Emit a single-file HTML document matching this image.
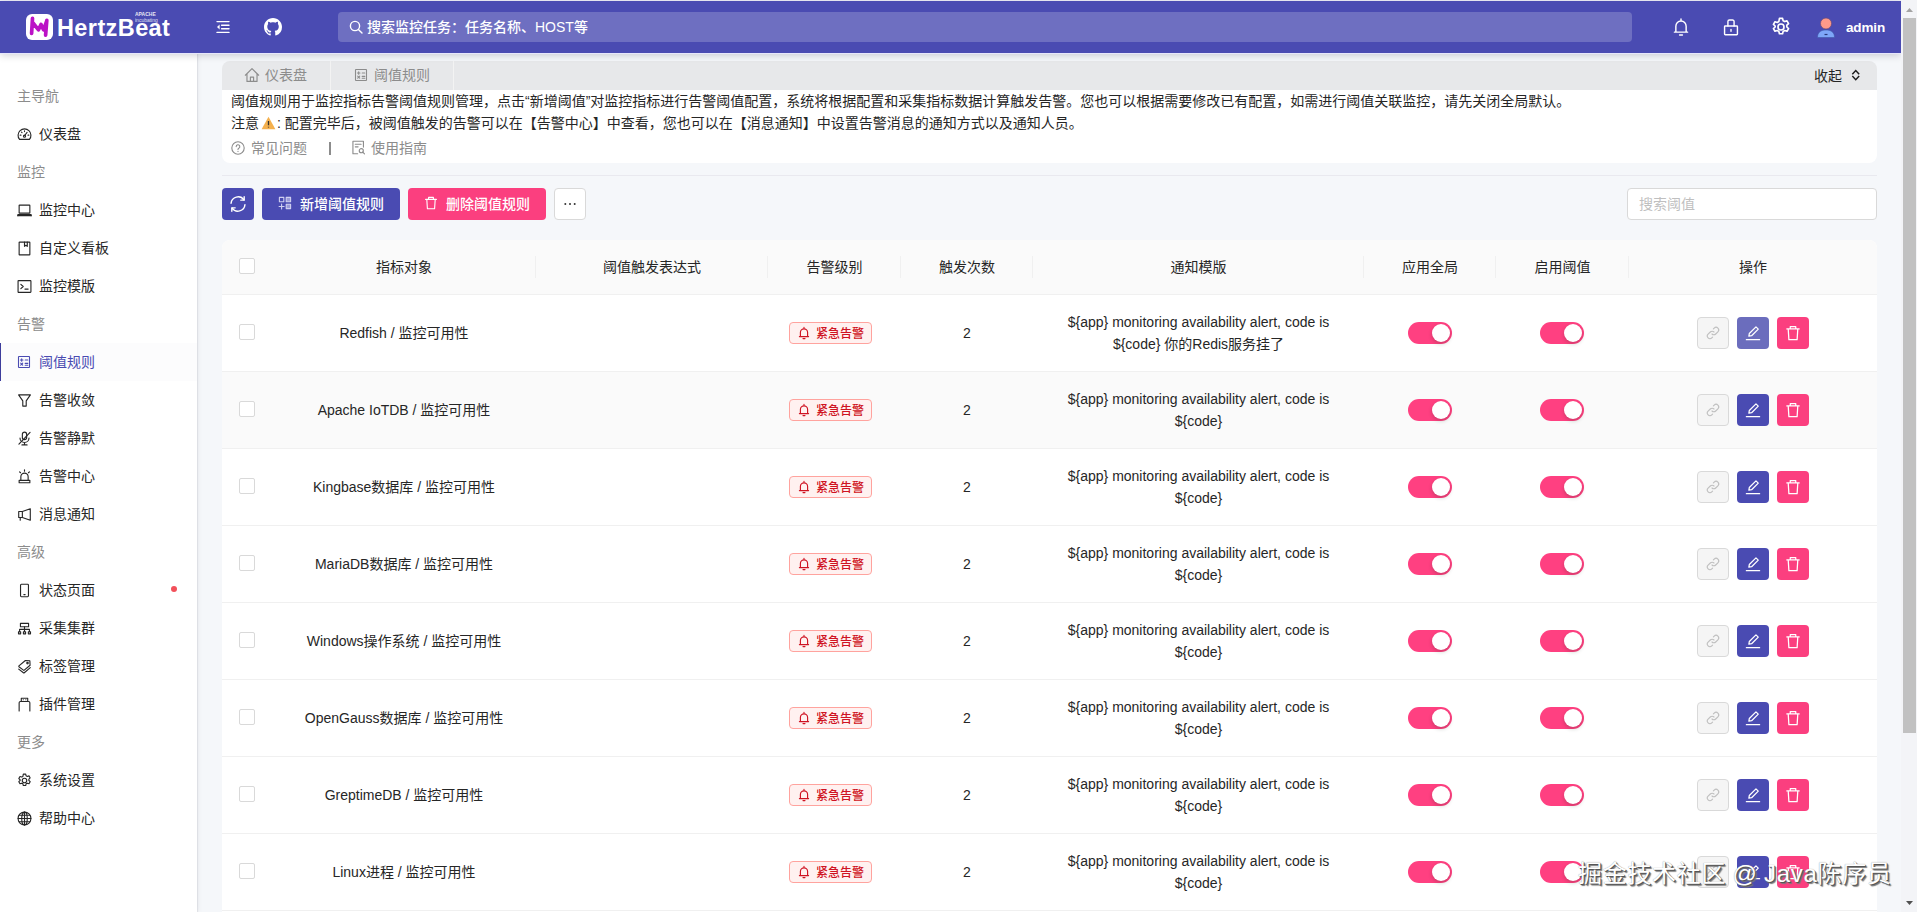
<!DOCTYPE html><html lang="zh-CN"><head><meta charset="utf-8"><title>HertzBeat</title><style>
*{box-sizing:border-box}
html,body{margin:0;padding:0}
body{width:1917px;height:912px;overflow:hidden;position:relative;background:#f5f7fa;
 font-family:"Liberation Sans","Noto Sans CJK SC",sans-serif;font-size:14px;line-height:22px;color:#262626}
.abs{position:absolute}
svg{display:block}
#topline{left:0;top:0;width:1917px;height:1px;background:#f1f1fa}
#hdr{z-index:5;left:0;top:1px;width:1901px;height:52px;background:#4a4bb2;box-shadow:0 1px 0 #e6e6fb,0 2px 8px rgba(0,10,40,.20)}
#side{left:0;top:53px;width:197px;height:859px;background:#fff;box-shadow:1px 0 1px rgba(40,40,70,.08),2px 0 5px rgba(29,35,41,.04)}
.grp{position:absolute;left:17px;height:38px;line-height:38px;color:#8c8c8c;font-size:14px;white-space:nowrap}
.itm{position:absolute;left:0;width:197px;height:38px;line-height:38px;white-space:nowrap;color:#262626}
.itm svg{position:absolute;left:16.500px;top:11.500px}
.itm span{position:absolute;left:39px;top:0}
.itm.sel{background:#fcfcfd;color:#4a4bb2}
.itm.sel:before{content:"";position:absolute;left:0;top:0;width:1.200px;height:38px;background:#3d3d9c}
#sbar{z-index:6;left:1901px;top:0;width:16px;height:912px;background:#f3f4f7}
#sthumb{z-index:7;left:1903px;top:18px;width:13px;height:715px;background:#c1c1c1}
#tabs{left:222px;top:61px;width:1655px;height:29px;background:#e7e8ea;border-radius:8px 8px 0 0}
#card{left:222px;top:90px;width:1655px;height:73px;background:#fff;border-radius:0 0 8px 8px}
.t{position:absolute;white-space:nowrap}
.btn{position:absolute;top:188px;height:32px;border-radius:4px}
#tbl{left:222px;top:240px;width:1655px;height:672px;background:#fff;border-radius:8px 8px 0 0;overflow:hidden}
.th{position:absolute;top:0;height:54px;line-height:54px;text-align:center;color:#262626}
.sep{position:absolute;top:16px;width:1px;height:22px;background:#f0f0f0}
.row{position:absolute;left:0;width:1655px;height:77px;border-bottom:1px solid #f0f0f0}
.cb{position:absolute;left:17px;width:16px;height:16px;border:1px solid #d9d9d9;border-radius:2px;background:#fff}
.c{position:absolute;text-align:center;white-space:nowrap}
.tag{position:absolute;left:567px;top:27px;width:83px;height:22px;border:1px solid #ffa39e;background:#fff1f0;border-radius:4px;color:#cf1322;font-size:12px;font-weight:500;line-height:20px}
.tag svg{position:absolute;left:7px;top:3px}
.tag span{position:absolute;left:26px;top:1px}
.sw{position:absolute;top:27px;width:44px;height:22px;border-radius:11px;background:#ff4081}
.sw:after{content:"";position:absolute;right:2px;top:2px;width:18px;height:18px;border-radius:9px;background:#fff;box-shadow:0 2px 4px rgba(0,35,11,.2)}
.ab{position:absolute;top:22px;width:32px;height:32px;border-radius:4px}
.ab svg{position:absolute;left:8px;top:8px}
</style></head><body>
<div class="abs" id="topline"></div>
<div class="abs" id="hdr">
<div class="abs" style="left:26px;top:13px;width:27px;height:26px;border-radius:6px;background:#fff"></div>
<svg class="abs" style="left:26px;top:13px" width="27" height="26" viewBox="0 0 27 26" fill="none" stroke="#bb12c6" stroke-width="3.700" stroke-linecap="round" stroke-linejoin="round"><path d="M6.500 4.300L5.600 19.300M7 9l5.500 6.800 2.500-5.300 2.500 5.300 3.300-8.800M20.800 6.300L19.600 21.200"/></svg>
<div class="t" style="left:57px;top:12px;font-size:23.500px;line-height:30px;font-weight:bold;color:#fff;letter-spacing:.400px">HertzBeat</div>
<div class="t" style="left:135px;top:10px;font-size:5px;line-height:6px;font-weight:bold;color:#fff;opacity:.85">APACHE</div>
<div class="t" style="left:135px;top:16px;font-size:5px;line-height:6px;color:#fff;opacity:.8">incubating</div>
<div class="abs" style="left:216px;top:19px;color:#fff"><svg width="14" height="14" viewBox="0 0 14 14" fill="none" stroke="currentColor" stroke-width="1.4" stroke-linecap="round" stroke-linejoin="round" ><path d="M1 1.600h12M5.600 5.200H13M5.600 8.800H13M1 12.400h12"/><path d="M3.600 4.600v4.800L1 7z" fill="currentColor" stroke="none"/></svg></div>
<svg class="abs" style="left:264px;top:17px" width="18" height="18" viewBox="0 0 16 16" fill="#fff"><path d="M8 0C3.580 0 0 3.580 0 8c0 3.540 2.290 6.530 5.470 7.590.400.070.550-.170.550-.380 0-.190-.010-.820-.010-1.490-2.010.370-2.530-.490-2.690-.940-.090-.230-.480-.940-.820-1.130-.280-.150-.680-.520-.010-.530.630-.010 1.080.580 1.230.820.720 1.210 1.870.870 2.330.660.070-.520.280-.870.510-1.070-1.780-.200-3.640-.890-3.640-3.950 0-.870.310-1.590.820-2.150-.080-.200-.360-1.020.080-2.120 0 0 .670-.210 2.200.820.640-.180 1.320-.270 2-.270s1.360.090 2 .270c1.530-1.040 2.200-.820 2.200-.820.440 1.100.160 1.920.080 2.120.510.560.820 1.270.820 2.150 0 3.070-1.870 3.750-3.650 3.950.290.250.540.730.540 1.480 0 1.070-.010 1.930-.010 2.200 0 .210.150.460.550.380A8.013 8.013 0 0 0 16 8c0-4.420-3.580-8-8-8z"/></svg>
<div class="abs" style="left:338px;top:11px;width:1294px;height:30px;border-radius:4px;background:rgba(255,255,255,.2)"></div>
<div class="abs" style="left:349px;top:19px;color:#fff"><svg width="14" height="14" viewBox="0 0 14 14" fill="none" stroke="currentColor" stroke-width="1.4" stroke-linecap="round" stroke-linejoin="round" ><circle cx="6" cy="6" r="4.600"/><path d="M9.400 9.400L13 13"/></svg></div>
<div class="t" style="left:367px;top:15px;color:#fff;font-weight:500;font-size:14px;line-height:22px">搜索监控任务：任务名称、HOST等</div>
<div class="abs" style="left:1671px;top:16px;color:#fff"><svg width="20" height="20" viewBox="0 0 14 14" fill="none" stroke="currentColor" stroke-width="1.0" stroke-linecap="round" stroke-linejoin="round" ><path d="M2.400 10.600h9.200M3.400 10.600V6.400a3.600 3.600 0 0 1 7.200 0v4.200M6 12.600h2M7 1.400v1.400"/></svg></div>
<div class="abs" style="left:1722px;top:17px;color:#fff"><svg width="18" height="18" viewBox="0 0 14 14" fill="none" stroke="currentColor" stroke-width="1.1" stroke-linecap="round" stroke-linejoin="round" ><rect x="2" y="6.200" width="10" height="6.800" rx=".5"/><path d="M4.600 6.200V2.800a1.200 1.200 0 0 1 1.200-1.200h2.400a1.200 1.200 0 0 1 1.200 1.200v3.400M7 9v1.400"/></svg></div>
<div class="abs" style="left:1771px;top:16px;color:#fff"><svg width="20" height="20" viewBox="0 0 14 14" fill="none" stroke="currentColor" stroke-width="1.15" stroke-linecap="round" stroke-linejoin="round" ><circle cx="7" cy="7" r="2.1"/><path d="M5.9 1h2.2l.4 1.6 1.1.6 1.6-.5 1.1 1.9-1.2 1.1v1.3l1.2 1.1-1.1 1.9-1.6-.5-1.1.6-.4 1.6H5.900l-.4-1.6-1.100-.6-1.600.5-1.100-1.900 1.200-1.100V6.300L1.700 5.200l1.100-1.900 1.600.5 1.100-.6z"/></svg></div>
<svg class="abs" style="left:1816px;top:15px" width="20" height="22" viewBox="0 0 20 22"><path d="M1.500 21.500c0-5 3-7.500 8.500-7.500s8.500 2.500 8.500 7.500z" fill="#7ea6f8" stroke="#4057a8" stroke-width=".600"/><path d="M8.500 18.500h3" stroke="#2a3a78" stroke-width="1.200"/><circle cx="10" cy="7.500" r="5.500" fill="#ff9a8a" stroke="#6a4a78" stroke-width=".700"/></svg>
<div class="t" style="left:1846px;top:16px;color:#fff;font-size:13.500px;line-height:22px;font-weight:bold;letter-spacing:-.150px">admin</div>
</div>
<div class="abs" id="side">
<div class="grp" style="top:24px">主导航</div>
<div class="itm" style="top:62px"><svg width="15" height="15" viewBox="0 0 14 14" fill="none" stroke="currentColor" stroke-width="1.05" stroke-linecap="round" stroke-linejoin="round" ><path d="M2.400 11.600A6 6 0 1 1 11.600 11.600z"/><path d="M7 8.200L9.400 5"/><circle cx="7" cy="8.600" r="1"/><path d="M3 7.600h.7M10.300 7.600h.7M7 3.600v.7M4.200 4.800l.5.5"/></svg><span>仪表盘</span></div>
<div class="grp" style="top:100px">监控</div>
<div class="itm" style="top:138px"><svg width="15" height="15" viewBox="0 0 14 14" fill="none" stroke="currentColor" stroke-width="1.05" stroke-linecap="round" stroke-linejoin="round" ><rect x="2" y="2" width="10" height="7.5" rx=".4"/><path d="M.8 11.8h12.4"/><path d="M.8 11.8v-.9h12.4v.9" /></svg><span>监控中心</span></div>
<div class="itm" style="top:176px"><svg width="15" height="15" viewBox="0 0 14 14" fill="none" stroke="currentColor" stroke-width="1.05" stroke-linecap="round" stroke-linejoin="round" ><rect x="2" y="1" width="10" height="12" rx=".5"/><path d="M7 1v4l1.3-1 1.3 1V1"/></svg><span>自定义看板</span></div>
<div class="itm" style="top:214px"><svg width="15" height="15" viewBox="0 0 14 14" fill="none" stroke="currentColor" stroke-width="1.05" stroke-linecap="round" stroke-linejoin="round" ><rect x="1" y="1.5" width="12" height="11" rx=".5"/><path d="M3.6 5l2.2 2-2.2 2M7.4 9.4h3"/></svg><span>监控模版</span></div>
<div class="grp" style="top:252px">告警</div>
<div class="itm sel" style="top:290px"><svg style="left:17px;top:12px" width="14" height="14" viewBox="0 0 14 14" fill="none" stroke="currentColor" stroke-width="1.1" stroke-linecap="round" stroke-linejoin="round" ><rect x="1.500" y="1.500" width="11" height="11" rx=".5"/><path d="M3.400 5h2.600M4.700 3.700v2.600M8.200 5h2.600M3.700 8.200l2 2M5.700 8.200l-2 2M8.200 8.400h2.600M8.200 10.200h2.600"/></svg><span>阈值规则</span></div>
<div class="itm" style="top:328px"><svg width="15" height="15" viewBox="0 0 14 14" fill="none" stroke="currentColor" stroke-width="1.05" stroke-linecap="round" stroke-linejoin="round" ><path d="M1.5 1.8h11L8.6 7.4v4.8H5.4V7.4z"/></svg><span>告警收敛</span></div>
<div class="itm" style="top:366px"><svg width="15" height="15" viewBox="0 0 14 14" fill="none" stroke="currentColor" stroke-width="1.05" stroke-linecap="round" stroke-linejoin="round" ><rect x="5" y="1" width="4" height="7" rx="2"/><path d="M2.8 6.5a4.2 4.2 0 0 0 8.4 0M7 10.8V13M4.6 13h4.8M12.2 1.2L1.8 12.2"/></svg><span>告警静默</span></div>
<div class="itm" style="top:404px"><svg width="15" height="15" viewBox="0 0 14 14" fill="none" stroke="currentColor" stroke-width="1.05" stroke-linecap="round" stroke-linejoin="round" ><path d="M3.6 10.6V7.2a3.4 3.4 0 0 1 6.8 0v3.4M2 10.6h10v2.2H2zM7 .8v1.2M2.4 2.6l.9.9M11.6 2.6l-.9.9"/></svg><span>告警中心</span></div>
<div class="itm" style="top:442px"><svg width="15" height="15" viewBox="0 0 14 14" fill="none" stroke="currentColor" stroke-width="1.05" stroke-linecap="round" stroke-linejoin="round" ><path d="M12.4 1.6v10.8L5 9.8H1.6V4.2H5zM5 4.2v5.6M3 9.8v2.6"/></svg><span>消息通知</span></div>
<div class="grp" style="top:480px">高级</div>
<div class="itm" style="top:518px"><svg width="15" height="15" viewBox="0 0 14 14" fill="none" stroke="currentColor" stroke-width="1.05" stroke-linecap="round" stroke-linejoin="round" ><rect x="3.300" y="1.200" width="7.400" height="11.600" rx=".8"/><path d="M6.400 10.800h1.200"/></svg><span>状态页面</span></div>
<div class="abs" style="left:171px;top:533px;width:6px;height:6px;border-radius:3px;background:#f2505a"></div>
<div class="itm" style="top:556px"><svg width="15" height="15" viewBox="0 0 14 14" fill="none" stroke="currentColor" stroke-width="1.05" stroke-linecap="round" stroke-linejoin="round" ><rect x="3.200" y="2.200" width="7.600" height="3.200"/><path d="M7 5.400v2.400M2.400 10V7.800h9.200V10M7 7.800V10"/><rect x="1.400" y="10" width="2" height="2"/><rect x="6" y="10" width="2" height="2"/><rect x="10.600" y="10" width="2" height="2"/></svg><span>采集集群</span></div>
<div class="itm" style="top:594px"><svg width="15" height="15" viewBox="0 0 14 14" fill="none" stroke="currentColor" stroke-width="1.05" stroke-linecap="round" stroke-linejoin="round" ><path d="M7.800 1.400l4.200.2.200 4.200-5.400 4.600a.6.600 0 0 1-.800 0L1.800 7.200a.6.600 0 0 1 0-.800z"/><circle cx="9.800" cy="3.800" r=".700"/><path d="M1.600 9.400l4.400 3.400a.6.600 0 0 0 .800 0l5.600-4.800"/></svg><span>标签管理</span></div>
<div class="itm" style="top:632px"><svg width="15" height="15" viewBox="0 0 14 14" fill="none" stroke="currentColor" stroke-width="1.05" stroke-linecap="round" stroke-linejoin="round" ><path d="M4 4.2V1.2h6v3M2 13V5.4c0-.7.5-1.2 1.2-1.2h7.6c.7 0 1.2.5 1.2 1.2V13M5.8 2.6h.1M8.2 2.6h.1"/></svg><span>插件管理</span></div>
<div class="grp" style="top:670px">更多</div>
<div class="itm" style="top:708px"><svg width="15" height="15" viewBox="0 0 14 14" fill="none" stroke="currentColor" stroke-width="1.05" stroke-linecap="round" stroke-linejoin="round" ><circle cx="7" cy="7" r="2.1"/><path d="M5.9 1h2.2l.4 1.6 1.1.6 1.6-.5 1.1 1.9-1.2 1.1v1.3l1.2 1.1-1.1 1.9-1.6-.5-1.1.6-.4 1.6H5.900l-.4-1.6-1.100-.6-1.600.5-1.100-1.900 1.200-1.100V6.300L1.700 5.200l1.100-1.900 1.600.5 1.100-.6z"/></svg><span>系统设置</span></div>
<div class="itm" style="top:746px"><svg width="15" height="15" viewBox="0 0 14 14" fill="none" stroke="currentColor" stroke-width="1.05" stroke-linecap="round" stroke-linejoin="round" ><circle cx="7" cy="7" r="6"/><ellipse cx="7" cy="7" rx="2.6" ry="6"/><path d="M1 7h12M1.800 4h10.400M1.800 10h10.400M7 1v12"/></svg><span>帮助中心</span></div>
</div>
<div class="abs" id="sbar"></div><div class="abs" id="sthumb"></div>
<svg class="abs" style="z-index:7;left:1906px;top:8px" width="7" height="4" viewBox="0 0 7 4"><path d="M0 4L3.500 0 7 4z" fill="#a3a3a3"/></svg>
<svg class="abs" style="z-index:7;left:1906px;top:901px" width="7" height="4" viewBox="0 0 7 4"><path d="M0 0L3.500 4 7 0z" fill="#505050"/></svg>
<div class="abs" id="tabs">
<div class="abs" style="left:108px;top:0;width:1px;height:29px;background:#f3f3f3"></div>
<div class="abs" style="left:231px;top:0;width:1px;height:29px;background:#f3f3f3"></div>
<div class="abs" style="left:22px;top:6px;color:#8c8c8c"><svg width="16" height="16" viewBox="0 0 14 14" fill="none" stroke="currentColor" stroke-width="1.0" stroke-linecap="round" stroke-linejoin="round" ><path d="M1.200 7.200L7 1.400l5.800 5.800M2.600 6v6.600h8.800V6M5.600 12.600V8.800h2.800v3.800"/></svg></div>
<div class="t" style="left:43px;top:3px;color:#8c8c8c">仪表盘</div>
<div class="abs" style="left:132px;top:7px;color:#8c8c8c"><svg width="14" height="14" viewBox="0 0 14 14" fill="none" stroke="currentColor" stroke-width="1.1" stroke-linecap="round" stroke-linejoin="round" ><rect x="1.500" y="1.500" width="11" height="11" rx=".5"/><path d="M3.400 5h2.600M4.700 3.700v2.600M8.200 5h2.600M3.700 8.200l2 2M5.700 8.200l-2 2M8.200 8.400h2.600M8.200 10.200h2.600"/></svg></div>
<div class="t" style="left:152px;top:3px;color:#8c8c8c">阈值规则</div>
<div class="t" style="left:1592px;top:4px;color:#262626;font-size:14px">收起</div>
<svg class="abs" style="left:1629px;top:8px" width="9.500" height="12" viewBox="0 0 11 14" fill="none" stroke="#1a1a1a" stroke-width="1.700" stroke-linejoin="miter"><path d="M1.500 6L5.500 1.800 9.500 6M1.500 8.200L5.500 12.400 9.500 8.200"/></svg>
</div>
<div class="abs" id="card">
<div class="t" style="left:9px;top:0">阈值规则用于监控指标告警阈值规则管理，点击“新增阈值”对监控指标进行告警阈值配置，系统将根据配置和采集指标数据计算触发告警。您也可以根据需要修改已有配置，如需进行阈值关联监控，请先关闭全局默认。</div>
<div class="t" style="left:9px;top:22px">注意<span style="display:inline-block;width:18px"></span>: 配置完毕后，被阈值触发的告警可以在【告警中心】中查看，您也可以在【消息通知】中设置告警消息的通知方式以及通知人员。</div>
<svg class="abs" style="left:39px;top:26px" width="15" height="14" viewBox="0 0 15 14"><path d="M7.500 .800L14.400 13.200H.600z" fill="#f4b04e"/><path d="M7.500 5v4.200M7.500 10.800v.8" stroke="#333" stroke-width="1.300" fill="none"/></svg>
<div class="abs" style="left:9px;top:51px;color:#8c8c8c"><svg width="14" height="14" viewBox="0 0 14 14" fill="none" stroke="currentColor" stroke-width="1.1" stroke-linecap="round" stroke-linejoin="round" ><circle cx="7" cy="7" r="6.200"/><path d="M5.200 5.600a1.800 1.800 0 1 1 2.600 1.600c-.5.300-.8.600-.8 1.200M7 10.200v.2"/></svg></div>
<div class="t" style="left:29px;top:47px;color:#8c8c8c">常见问题</div>
<div class="abs" style="left:107px;top:52px;width:2px;height:13px;background:#8c8c8c"></div>
<div class="abs" style="left:129px;top:50px;color:#8c8c8c"><svg width="15" height="15" viewBox="0 0 14 14" fill="none" stroke="currentColor" stroke-width="1.05" stroke-linecap="round" stroke-linejoin="round" ><path d="M11.600 6.600V1.200H1.800v11.600h4.400M4 4h5.400M4 6.400h2.600"/><circle cx="9.600" cy="10" r="1.900"/><path d="M11 11.400l1.600 1.600"/></svg></div>
<div class="t" style="left:149px;top:47px;color:#8c8c8c">使用指南</div>
</div>
<div class="abs" style="left:222px;top:175px;width:1655px;height:1px;background:#e9e9ef"></div>
<div class="btn" style="left:222px;width:32px;background:#4a4bb2;color:#fff"><div class="abs" style="left:7px;top:7px"><svg width="18" height="18" viewBox="0 0 14 14" fill="none" stroke="currentColor" stroke-width="1.1" stroke-linecap="round" stroke-linejoin="round" ><path d="M1.600 6.400A5.500 5.500 0 0 1 11.600 3.800M12.400 7.600A5.500 5.500 0 0 1 2.400 10.200"/><path d="M11.800 1.400v2.600H9.200M2.200 12.600V10h2.600"/></svg></div></div>
<div class="btn" style="left:262px;width:138px;background:#4a4bb2;color:#fff"><div class="abs" style="left:16px;top:8px;color:#cfcff0"><svg width="14" height="14" viewBox="0 0 14 14" fill="none" stroke="currentColor" stroke-width="1.1" stroke-linecap="round" stroke-linejoin="round" ><rect x="1.400" y="1.400" width="4.400" height="4.400"/><rect x="8.200" y="1.400" width="4.400" height="4.400" fill="#9a9ad8"/><rect x="8.200" y="8.200" width="4.400" height="4.400" fill="#9a9ad8"/><path d="M3.600 8v5M1.100 10.500h5"/></svg></div><div class="t" style="left:38px;top:5px;font-weight:500">新增阈值规则</div></div>
<div class="btn" style="left:408px;width:138px;background:#fb3f7f;color:#fff"><div class="abs" style="left:16px;top:8px"><svg width="14" height="14" viewBox="0 0 14 14" fill="none" stroke="currentColor" stroke-width="1.1" stroke-linecap="round" stroke-linejoin="round" ><path d="M1.600 3.400h10.800M4.600 3.400V1.400h4.800v2M2.800 3.400l.6 9.400h7.200l.6-9.400"/></svg></div><div class="t" style="left:38px;top:5px;font-weight:500">删除阈值规则</div></div>
<div class="btn" style="left:554px;width:32px;background:#fff;border:1px solid #d9d9d9"><svg class="abs" style="left:8px;top:8px" width="14" height="14" viewBox="0 0 14 14" fill="#333"><circle cx="2.300" cy="7" r="1"/><circle cx="7" cy="7" r="1"/><circle cx="11.700" cy="7" r="1"/></svg></div>
<div class="abs" style="left:1627px;top:188px;width:250px;height:32px;border:1px solid #d9d9d9;border-radius:4px;background:#fff"><div class="t" style="left:11px;top:4px;color:#bfbfbf">搜索阈值</div></div>
<div class="abs" id="tbl">
<div class="abs" style="left:0;top:0;width:1655px;height:55px;background:#fafafa;border-bottom:1px solid #f0f0f0">
<div class="cb" style="top:18px"></div>
<div class="th" style="left:50px;width:264px">指标对象</div>
<div class="sep" style="left:313px"></div>
<div class="th" style="left:314px;width:232px">阈值触发表达式</div>
<div class="sep" style="left:545px"></div>
<div class="th" style="left:546px;width:133px">告警级别</div>
<div class="sep" style="left:678px"></div>
<div class="th" style="left:679px;width:132px">触发次数</div>
<div class="sep" style="left:810px"></div>
<div class="th" style="left:811px;width:331px">通知模版</div>
<div class="sep" style="left:1141px"></div>
<div class="th" style="left:1142px;width:132px">应用全局</div>
<div class="sep" style="left:1273px"></div>
<div class="th" style="left:1274px;width:133px">启用阈值</div>
<div class="sep" style="left:1406px"></div>
<div class="th" style="left:1407px;width:248px">操作</div>
</div>
<div class="row" style="top:55px;background:#fff">
<div class="cb" style="top:29px"></div>
<div class="c" style="left:50px;width:264px;top:27px">Redfish / 监控可用性</div>
<div class="tag"><svg width="14" height="14" viewBox="0 0 14 14" fill="none" stroke="currentColor" stroke-width="1.15" stroke-linecap="round" stroke-linejoin="round" ><path d="M2.400 10.600h9.200M3.400 10.600V6.400a3.600 3.600 0 0 1 7.200 0v4.200M6 12.600h2M7 1.400v1.400"/></svg><span>紧急告警</span></div>
<div class="c" style="left:679px;width:132px;top:27px">2</div>
<div class="c" style="left:811px;width:331px;top:16px">${app} monitoring availability alert, code is<br>${code} 你的Redis服务挂了</div>
<div class="sw" style="left:1186px"></div><div class="sw" style="left:1318px"></div>
<div class="ab" style="left:1475px;background:#f5f5f5;border:1px solid #d9d9d9;color:#bfbfbf"><svg style="left:8px;top:8px" width="14" height="14" viewBox="0 0 14 14" fill="none" stroke="currentColor" stroke-width="1.1" stroke-linecap="round" stroke-linejoin="round" ><path d="M6 8a2.600 2.600 0 0 0 3.700 0l2.200-2.200a2.600 2.600 0 0 0-3.700-3.700L7.400 2.900M8 6a2.600 2.600 0 0 0-3.700 0L2.100 8.200a2.600 2.600 0 0 0 3.700 3.700l.800-.800"/></svg></div>
<div class="ab" style="left:1515px;background:#6b6dbd;color:#fff"><svg width="16" height="16" viewBox="0 0 14 14" fill="none" stroke="currentColor" stroke-width="1.1" stroke-linecap="round" stroke-linejoin="round" ><path d="M1.200 12.800h11.600M3.400 9.800l.4-2.400L9.600 1.600l2 2-5.800 5.800z"/></svg></div>
<div class="ab" style="left:1555px;background:#fb3f7f;color:#fff"><svg width="16" height="16" viewBox="0 0 14 14" fill="none" stroke="currentColor" stroke-width="1.1" stroke-linecap="round" stroke-linejoin="round" ><path d="M1.600 3.400h10.800M4.600 3.400V1.400h4.800v2M2.800 3.400l.6 9.400h7.200l.6-9.400"/></svg></div>
</div>
<div class="row" style="top:132px;background:#fafafa">
<div class="cb" style="top:29px"></div>
<div class="c" style="left:50px;width:264px;top:27px">Apache IoTDB / 监控可用性</div>
<div class="tag"><svg width="14" height="14" viewBox="0 0 14 14" fill="none" stroke="currentColor" stroke-width="1.15" stroke-linecap="round" stroke-linejoin="round" ><path d="M2.400 10.600h9.200M3.400 10.600V6.400a3.600 3.600 0 0 1 7.200 0v4.200M6 12.600h2M7 1.400v1.400"/></svg><span>紧急告警</span></div>
<div class="c" style="left:679px;width:132px;top:27px">2</div>
<div class="c" style="left:811px;width:331px;top:16px">${app} monitoring availability alert, code is<br>${code}</div>
<div class="sw" style="left:1186px"></div><div class="sw" style="left:1318px"></div>
<div class="ab" style="left:1475px;background:#f5f5f5;border:1px solid #d9d9d9;color:#bfbfbf"><svg style="left:8px;top:8px" width="14" height="14" viewBox="0 0 14 14" fill="none" stroke="currentColor" stroke-width="1.1" stroke-linecap="round" stroke-linejoin="round" ><path d="M6 8a2.600 2.600 0 0 0 3.700 0l2.200-2.200a2.600 2.600 0 0 0-3.700-3.700L7.400 2.900M8 6a2.600 2.600 0 0 0-3.700 0L2.100 8.200a2.600 2.600 0 0 0 3.700 3.700l.800-.800"/></svg></div>
<div class="ab" style="left:1515px;background:#4a4bb2;color:#fff"><svg width="16" height="16" viewBox="0 0 14 14" fill="none" stroke="currentColor" stroke-width="1.1" stroke-linecap="round" stroke-linejoin="round" ><path d="M1.200 12.800h11.600M3.400 9.800l.4-2.400L9.600 1.600l2 2-5.800 5.800z"/></svg></div>
<div class="ab" style="left:1555px;background:#fb3f7f;color:#fff"><svg width="16" height="16" viewBox="0 0 14 14" fill="none" stroke="currentColor" stroke-width="1.1" stroke-linecap="round" stroke-linejoin="round" ><path d="M1.600 3.400h10.800M4.600 3.400V1.400h4.800v2M2.800 3.400l.6 9.400h7.200l.6-9.400"/></svg></div>
</div>
<div class="row" style="top:209px;background:#fff">
<div class="cb" style="top:29px"></div>
<div class="c" style="left:50px;width:264px;top:27px">Kingbase数据库 / 监控可用性</div>
<div class="tag"><svg width="14" height="14" viewBox="0 0 14 14" fill="none" stroke="currentColor" stroke-width="1.15" stroke-linecap="round" stroke-linejoin="round" ><path d="M2.400 10.600h9.200M3.400 10.600V6.400a3.600 3.600 0 0 1 7.200 0v4.200M6 12.600h2M7 1.400v1.400"/></svg><span>紧急告警</span></div>
<div class="c" style="left:679px;width:132px;top:27px">2</div>
<div class="c" style="left:811px;width:331px;top:16px">${app} monitoring availability alert, code is<br>${code}</div>
<div class="sw" style="left:1186px"></div><div class="sw" style="left:1318px"></div>
<div class="ab" style="left:1475px;background:#f5f5f5;border:1px solid #d9d9d9;color:#bfbfbf"><svg style="left:8px;top:8px" width="14" height="14" viewBox="0 0 14 14" fill="none" stroke="currentColor" stroke-width="1.1" stroke-linecap="round" stroke-linejoin="round" ><path d="M6 8a2.600 2.600 0 0 0 3.700 0l2.200-2.200a2.600 2.600 0 0 0-3.700-3.700L7.400 2.900M8 6a2.600 2.600 0 0 0-3.700 0L2.100 8.200a2.600 2.600 0 0 0 3.700 3.700l.800-.800"/></svg></div>
<div class="ab" style="left:1515px;background:#4a4bb2;color:#fff"><svg width="16" height="16" viewBox="0 0 14 14" fill="none" stroke="currentColor" stroke-width="1.1" stroke-linecap="round" stroke-linejoin="round" ><path d="M1.200 12.800h11.600M3.400 9.800l.4-2.400L9.600 1.600l2 2-5.800 5.800z"/></svg></div>
<div class="ab" style="left:1555px;background:#fb3f7f;color:#fff"><svg width="16" height="16" viewBox="0 0 14 14" fill="none" stroke="currentColor" stroke-width="1.1" stroke-linecap="round" stroke-linejoin="round" ><path d="M1.600 3.400h10.800M4.600 3.400V1.400h4.800v2M2.800 3.400l.6 9.400h7.200l.6-9.400"/></svg></div>
</div>
<div class="row" style="top:286px;background:#fff">
<div class="cb" style="top:29px"></div>
<div class="c" style="left:50px;width:264px;top:27px">MariaDB数据库 / 监控可用性</div>
<div class="tag"><svg width="14" height="14" viewBox="0 0 14 14" fill="none" stroke="currentColor" stroke-width="1.15" stroke-linecap="round" stroke-linejoin="round" ><path d="M2.400 10.600h9.200M3.400 10.600V6.400a3.600 3.600 0 0 1 7.200 0v4.200M6 12.600h2M7 1.400v1.400"/></svg><span>紧急告警</span></div>
<div class="c" style="left:679px;width:132px;top:27px">2</div>
<div class="c" style="left:811px;width:331px;top:16px">${app} monitoring availability alert, code is<br>${code}</div>
<div class="sw" style="left:1186px"></div><div class="sw" style="left:1318px"></div>
<div class="ab" style="left:1475px;background:#f5f5f5;border:1px solid #d9d9d9;color:#bfbfbf"><svg style="left:8px;top:8px" width="14" height="14" viewBox="0 0 14 14" fill="none" stroke="currentColor" stroke-width="1.1" stroke-linecap="round" stroke-linejoin="round" ><path d="M6 8a2.600 2.600 0 0 0 3.700 0l2.200-2.200a2.600 2.600 0 0 0-3.700-3.700L7.400 2.900M8 6a2.600 2.600 0 0 0-3.700 0L2.100 8.200a2.600 2.600 0 0 0 3.700 3.700l.800-.800"/></svg></div>
<div class="ab" style="left:1515px;background:#4a4bb2;color:#fff"><svg width="16" height="16" viewBox="0 0 14 14" fill="none" stroke="currentColor" stroke-width="1.1" stroke-linecap="round" stroke-linejoin="round" ><path d="M1.200 12.800h11.600M3.400 9.800l.4-2.400L9.600 1.600l2 2-5.800 5.800z"/></svg></div>
<div class="ab" style="left:1555px;background:#fb3f7f;color:#fff"><svg width="16" height="16" viewBox="0 0 14 14" fill="none" stroke="currentColor" stroke-width="1.1" stroke-linecap="round" stroke-linejoin="round" ><path d="M1.600 3.400h10.800M4.600 3.400V1.400h4.800v2M2.800 3.400l.6 9.400h7.200l.6-9.400"/></svg></div>
</div>
<div class="row" style="top:363px;background:#fff">
<div class="cb" style="top:29px"></div>
<div class="c" style="left:50px;width:264px;top:27px">Windows操作系统 / 监控可用性</div>
<div class="tag"><svg width="14" height="14" viewBox="0 0 14 14" fill="none" stroke="currentColor" stroke-width="1.15" stroke-linecap="round" stroke-linejoin="round" ><path d="M2.400 10.600h9.200M3.400 10.600V6.400a3.600 3.600 0 0 1 7.200 0v4.200M6 12.600h2M7 1.400v1.400"/></svg><span>紧急告警</span></div>
<div class="c" style="left:679px;width:132px;top:27px">2</div>
<div class="c" style="left:811px;width:331px;top:16px">${app} monitoring availability alert, code is<br>${code}</div>
<div class="sw" style="left:1186px"></div><div class="sw" style="left:1318px"></div>
<div class="ab" style="left:1475px;background:#f5f5f5;border:1px solid #d9d9d9;color:#bfbfbf"><svg style="left:8px;top:8px" width="14" height="14" viewBox="0 0 14 14" fill="none" stroke="currentColor" stroke-width="1.1" stroke-linecap="round" stroke-linejoin="round" ><path d="M6 8a2.600 2.600 0 0 0 3.700 0l2.200-2.200a2.600 2.600 0 0 0-3.700-3.700L7.400 2.900M8 6a2.600 2.600 0 0 0-3.700 0L2.100 8.200a2.600 2.600 0 0 0 3.700 3.700l.800-.800"/></svg></div>
<div class="ab" style="left:1515px;background:#4a4bb2;color:#fff"><svg width="16" height="16" viewBox="0 0 14 14" fill="none" stroke="currentColor" stroke-width="1.1" stroke-linecap="round" stroke-linejoin="round" ><path d="M1.200 12.800h11.600M3.400 9.800l.4-2.400L9.600 1.600l2 2-5.800 5.800z"/></svg></div>
<div class="ab" style="left:1555px;background:#fb3f7f;color:#fff"><svg width="16" height="16" viewBox="0 0 14 14" fill="none" stroke="currentColor" stroke-width="1.1" stroke-linecap="round" stroke-linejoin="round" ><path d="M1.600 3.400h10.800M4.600 3.400V1.400h4.800v2M2.800 3.400l.6 9.400h7.200l.6-9.400"/></svg></div>
</div>
<div class="row" style="top:440px;background:#fff">
<div class="cb" style="top:29px"></div>
<div class="c" style="left:50px;width:264px;top:27px">OpenGauss数据库 / 监控可用性</div>
<div class="tag"><svg width="14" height="14" viewBox="0 0 14 14" fill="none" stroke="currentColor" stroke-width="1.15" stroke-linecap="round" stroke-linejoin="round" ><path d="M2.400 10.600h9.200M3.400 10.600V6.400a3.600 3.600 0 0 1 7.200 0v4.200M6 12.600h2M7 1.400v1.400"/></svg><span>紧急告警</span></div>
<div class="c" style="left:679px;width:132px;top:27px">2</div>
<div class="c" style="left:811px;width:331px;top:16px">${app} monitoring availability alert, code is<br>${code}</div>
<div class="sw" style="left:1186px"></div><div class="sw" style="left:1318px"></div>
<div class="ab" style="left:1475px;background:#f5f5f5;border:1px solid #d9d9d9;color:#bfbfbf"><svg style="left:8px;top:8px" width="14" height="14" viewBox="0 0 14 14" fill="none" stroke="currentColor" stroke-width="1.1" stroke-linecap="round" stroke-linejoin="round" ><path d="M6 8a2.600 2.600 0 0 0 3.700 0l2.200-2.200a2.600 2.600 0 0 0-3.700-3.700L7.400 2.900M8 6a2.600 2.600 0 0 0-3.700 0L2.100 8.200a2.600 2.600 0 0 0 3.700 3.700l.800-.800"/></svg></div>
<div class="ab" style="left:1515px;background:#4a4bb2;color:#fff"><svg width="16" height="16" viewBox="0 0 14 14" fill="none" stroke="currentColor" stroke-width="1.1" stroke-linecap="round" stroke-linejoin="round" ><path d="M1.200 12.800h11.600M3.400 9.800l.4-2.400L9.600 1.600l2 2-5.800 5.800z"/></svg></div>
<div class="ab" style="left:1555px;background:#fb3f7f;color:#fff"><svg width="16" height="16" viewBox="0 0 14 14" fill="none" stroke="currentColor" stroke-width="1.1" stroke-linecap="round" stroke-linejoin="round" ><path d="M1.600 3.400h10.800M4.600 3.400V1.400h4.800v2M2.800 3.400l.6 9.400h7.200l.6-9.400"/></svg></div>
</div>
<div class="row" style="top:517px;background:#fff">
<div class="cb" style="top:29px"></div>
<div class="c" style="left:50px;width:264px;top:27px">GreptimeDB / 监控可用性</div>
<div class="tag"><svg width="14" height="14" viewBox="0 0 14 14" fill="none" stroke="currentColor" stroke-width="1.15" stroke-linecap="round" stroke-linejoin="round" ><path d="M2.400 10.600h9.200M3.400 10.600V6.400a3.600 3.600 0 0 1 7.200 0v4.200M6 12.600h2M7 1.400v1.400"/></svg><span>紧急告警</span></div>
<div class="c" style="left:679px;width:132px;top:27px">2</div>
<div class="c" style="left:811px;width:331px;top:16px">${app} monitoring availability alert, code is<br>${code}</div>
<div class="sw" style="left:1186px"></div><div class="sw" style="left:1318px"></div>
<div class="ab" style="left:1475px;background:#f5f5f5;border:1px solid #d9d9d9;color:#bfbfbf"><svg style="left:8px;top:8px" width="14" height="14" viewBox="0 0 14 14" fill="none" stroke="currentColor" stroke-width="1.1" stroke-linecap="round" stroke-linejoin="round" ><path d="M6 8a2.600 2.600 0 0 0 3.700 0l2.200-2.200a2.600 2.600 0 0 0-3.700-3.700L7.400 2.900M8 6a2.600 2.600 0 0 0-3.700 0L2.100 8.200a2.600 2.600 0 0 0 3.700 3.700l.800-.800"/></svg></div>
<div class="ab" style="left:1515px;background:#4a4bb2;color:#fff"><svg width="16" height="16" viewBox="0 0 14 14" fill="none" stroke="currentColor" stroke-width="1.1" stroke-linecap="round" stroke-linejoin="round" ><path d="M1.200 12.800h11.600M3.400 9.800l.4-2.400L9.600 1.600l2 2-5.800 5.800z"/></svg></div>
<div class="ab" style="left:1555px;background:#fb3f7f;color:#fff"><svg width="16" height="16" viewBox="0 0 14 14" fill="none" stroke="currentColor" stroke-width="1.1" stroke-linecap="round" stroke-linejoin="round" ><path d="M1.600 3.400h10.800M4.600 3.400V1.400h4.800v2M2.800 3.400l.6 9.400h7.200l.6-9.400"/></svg></div>
</div>
<div class="row" style="top:594px;background:#fff">
<div class="cb" style="top:29px"></div>
<div class="c" style="left:50px;width:264px;top:27px">Linux进程 / 监控可用性</div>
<div class="tag"><svg width="14" height="14" viewBox="0 0 14 14" fill="none" stroke="currentColor" stroke-width="1.15" stroke-linecap="round" stroke-linejoin="round" ><path d="M2.400 10.600h9.200M3.400 10.600V6.400a3.600 3.600 0 0 1 7.200 0v4.200M6 12.600h2M7 1.400v1.400"/></svg><span>紧急告警</span></div>
<div class="c" style="left:679px;width:132px;top:27px">2</div>
<div class="c" style="left:811px;width:331px;top:16px">${app} monitoring availability alert, code is<br>${code}</div>
<div class="sw" style="left:1186px"></div><div class="sw" style="left:1318px"></div>
<div class="ab" style="left:1475px;background:#f5f5f5;border:1px solid #d9d9d9;color:#bfbfbf"><svg style="left:8px;top:8px" width="14" height="14" viewBox="0 0 14 14" fill="none" stroke="currentColor" stroke-width="1.1" stroke-linecap="round" stroke-linejoin="round" ><path d="M6 8a2.600 2.600 0 0 0 3.700 0l2.200-2.200a2.600 2.600 0 0 0-3.700-3.700L7.400 2.900M8 6a2.600 2.600 0 0 0-3.700 0L2.100 8.200a2.600 2.600 0 0 0 3.700 3.700l.800-.800"/></svg></div>
<div class="ab" style="left:1515px;background:#4a4bb2;color:#fff"><svg width="16" height="16" viewBox="0 0 14 14" fill="none" stroke="currentColor" stroke-width="1.1" stroke-linecap="round" stroke-linejoin="round" ><path d="M1.200 12.800h11.600M3.400 9.800l.4-2.400L9.600 1.600l2 2-5.800 5.800z"/></svg></div>
<div class="ab" style="left:1555px;background:#fb3f7f;color:#fff"><svg width="16" height="16" viewBox="0 0 14 14" fill="none" stroke="currentColor" stroke-width="1.1" stroke-linecap="round" stroke-linejoin="round" ><path d="M1.600 3.400h10.800M4.600 3.400V1.400h4.800v2M2.800 3.400l.6 9.400h7.200l.6-9.400"/></svg></div>
</div>
<div class="row" style="top:671px;background:#fff">
</div>
</div>
<div class="t" style="left:1578px;top:858px;font-size:24px;line-height:32px;letter-spacing:.700px;word-spacing:-1px;color:#fff;text-shadow:1px 1px 0 #555,2px 2px 1px #777,0 0 1px #888">掘金技术社区 @ Java陈序员</div>
</body></html>
